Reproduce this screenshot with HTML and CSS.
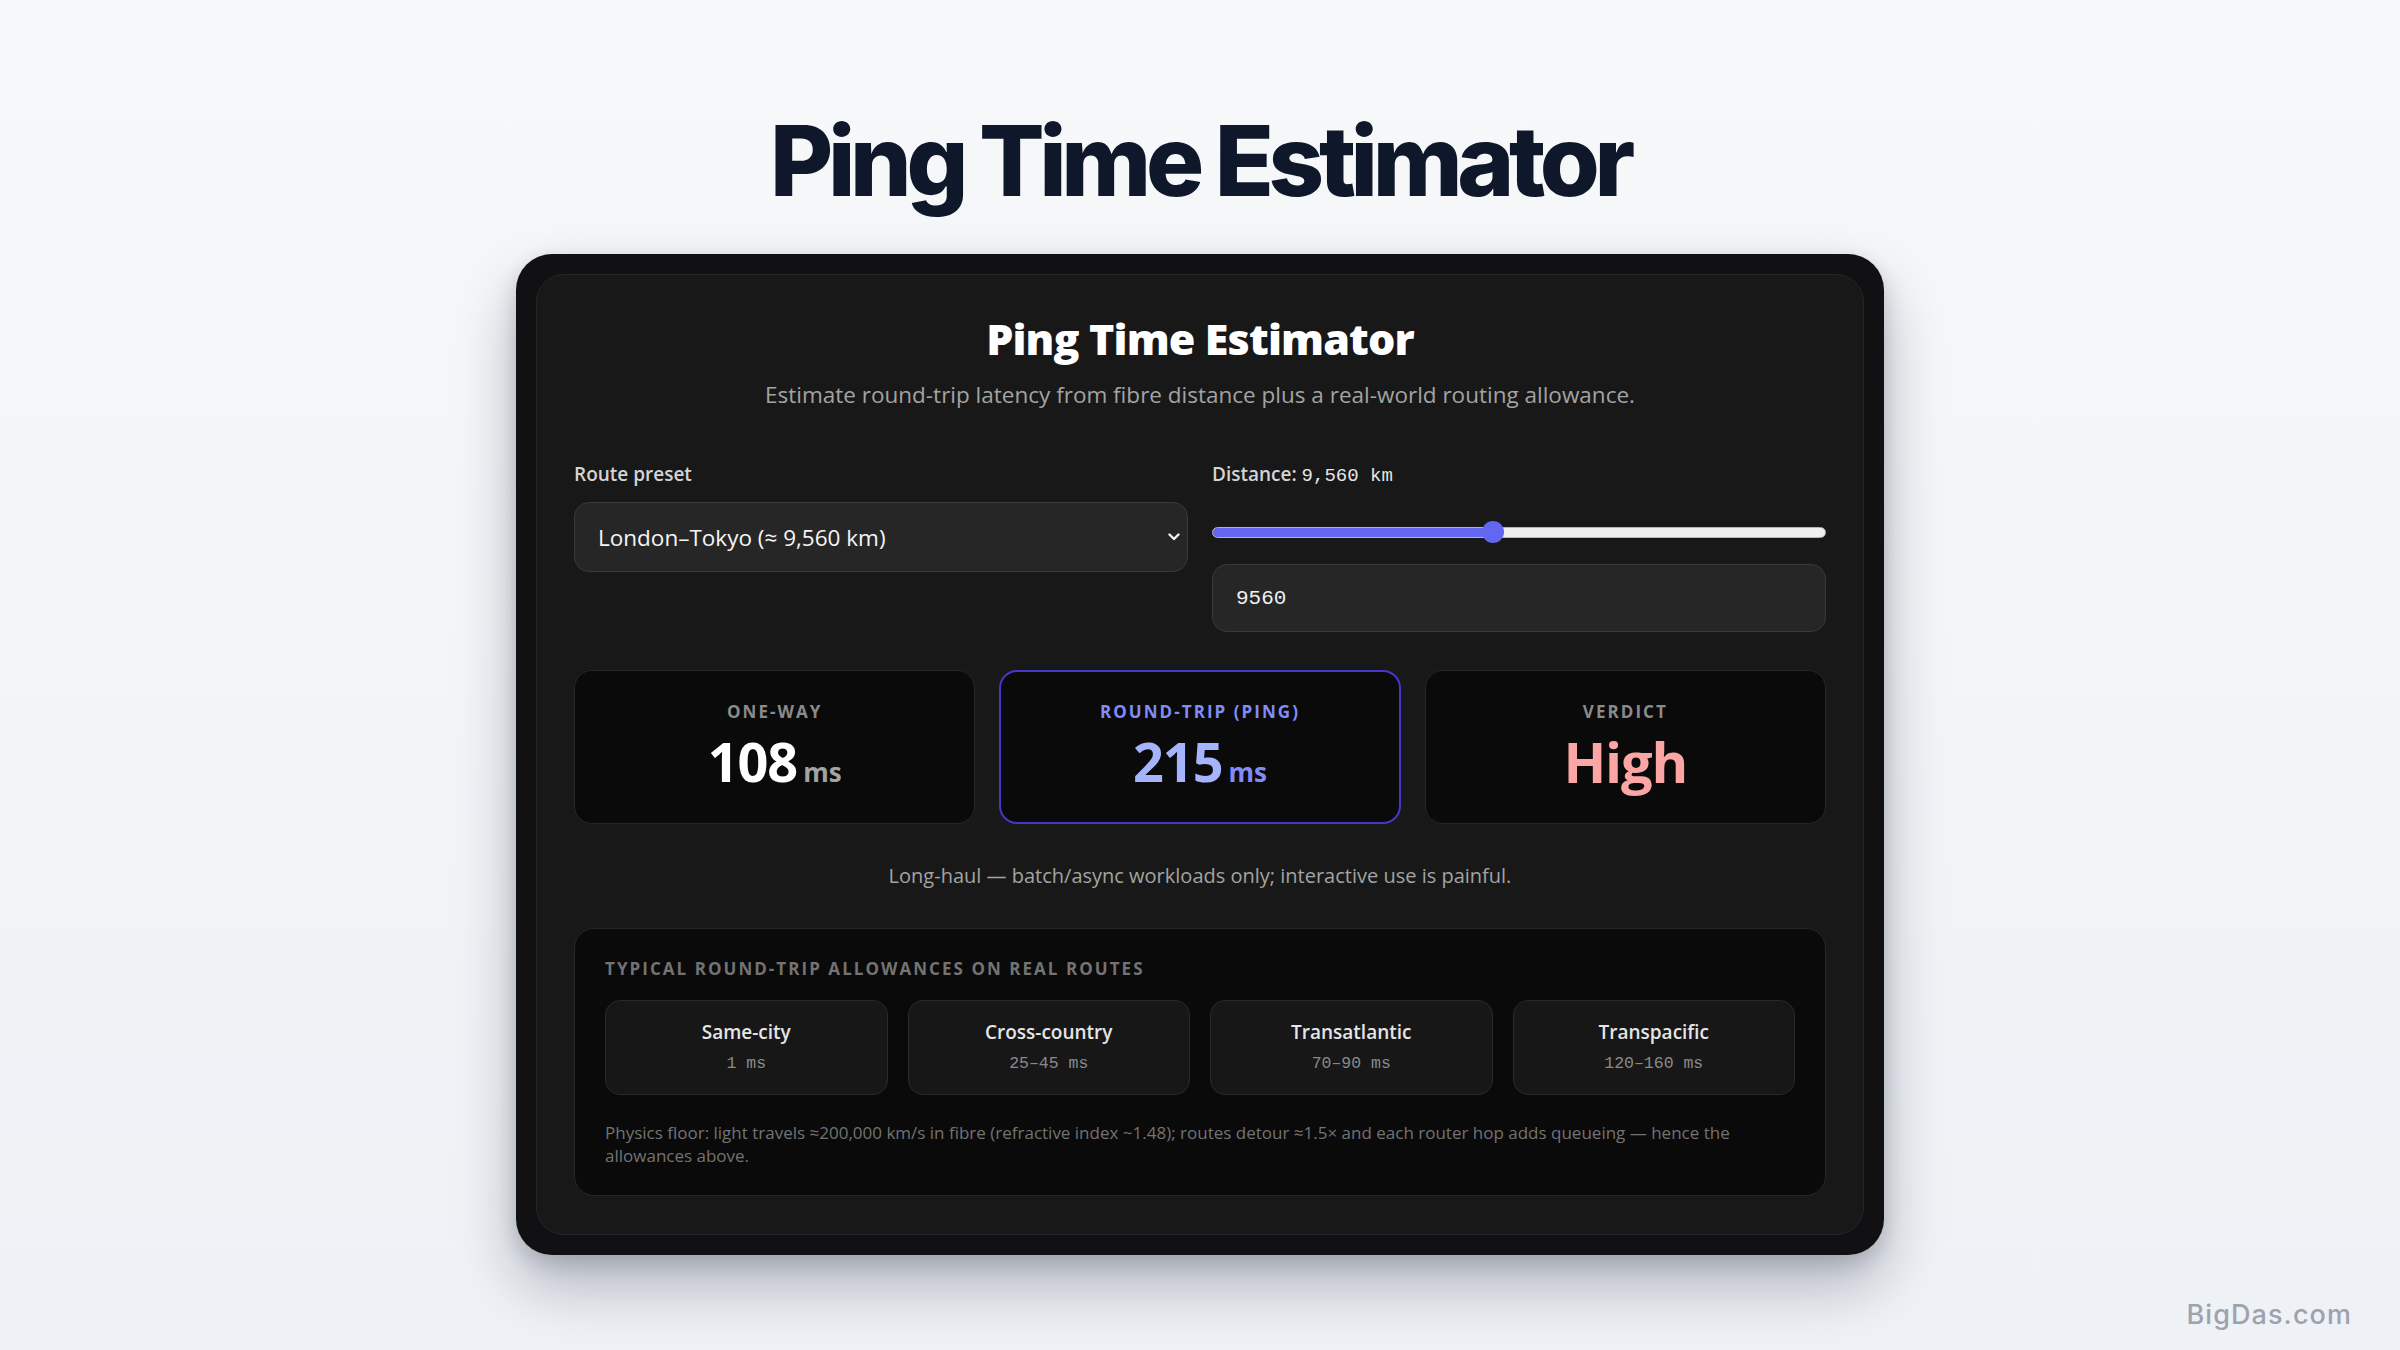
FILE: index.html
```html
<!DOCTYPE html>
<html lang="en">
<head>
<meta charset="utf-8">
<title>Ping Time Estimator</title>
<link rel="stylesheet" href="styles.css">
</head>
<body>
<main class="page">
  <h1 class="hero">Ping Time Estimator</h1>
  <section class="frame">
    <div class="card">
      <h2 class="card-title">Ping Time Estimator</h2>
      <p class="subtitle">Estimate round-trip latency from fibre distance plus a real-world routing allowance.</p>

      <div class="controls">
        <div class="field">
          <label class="label" for="preset">Route preset</label>
          <div class="select-wrap">
            <select id="preset" class="select">
              <option>London–Tokyo (≈ 9,560 km)</option>
            </select>
            <svg class="chevron" viewBox="0 0 12 8" width="12" height="8" aria-hidden="true"><path d="M1.5 1.5 L6 6 L10.5 1.5" fill="none" stroke="#f5f5f5" stroke-width="2.4" stroke-linecap="round" stroke-linejoin="round"/></svg>
          </div>
        </div>
        <div class="field">
          <label class="label" for="dist">Distance: <span class="mono">9,560 km</span></label>
          <input id="dist" class="range" type="range" min="0" max="21000" value="9560" style="--pct:45.5%">
          <input class="number" type="text" value="9560">
        </div>
      </div>

      <div class="stats">
        <div class="stat">
          <div class="stat-label">ONE-WAY</div>
          <div class="stat-value">108<span class="unit">ms</span></div>
        </div>
        <div class="stat stat-accent">
          <div class="stat-label">ROUND-TRIP (PING)</div>
          <div class="stat-value">215<span class="unit">ms</span></div>
        </div>
        <div class="stat stat-verdict">
          <div class="stat-label">VERDICT</div>
          <div class="stat-value">High</div>
        </div>
      </div>

      <p class="note">Long-haul — batch/async workloads only; interactive use is painful.</p>

      <div class="panel">
        <div class="panel-title">TYPICAL ROUND-TRIP ALLOWANCES ON REAL ROUTES</div>
        <div class="routes">
          <div class="route"><div class="route-name">Same-city</div><div class="route-ms">1 ms</div></div>
          <div class="route"><div class="route-name">Cross-country</div><div class="route-ms">25–45 ms</div></div>
          <div class="route"><div class="route-name">Transatlantic</div><div class="route-ms">70–90 ms</div></div>
          <div class="route"><div class="route-name">Transpacific</div><div class="route-ms">120–160 ms</div></div>
        </div>
        <p class="footnote">Physics floor: light travels ≈200,000 km/s in fibre (refractive index ~1.48); routes detour ≈1.5× and each router hop adds queueing — hence the allowances above.</p>
      </div>
    </div>
  </section>
  <div class="brand">BigDas.com</div>
</main>
</body>
</html>
```

FILE: styles.css
```css
* { box-sizing: border-box; }

html, body {
  margin: 0;
  padding: 0;
}

body {
  min-height: 100vh;
  background: linear-gradient(180deg, #f7f8fa 0%, #eef1f5 100%);
  font-family: "Open Sans", "Noto Sans", sans-serif;
  color: #e5e5e5;
}

.page {
  min-height: 100vh;
  display: flex;
  flex-direction: column;
  align-items: center;
  padding-top: 102px;
  position: relative;
}

.hero {
  margin: 0;
  font-family: Inter, "Noto Sans", sans-serif;
  font-weight: 800;
  font-size: 97px;
  line-height: 118px;
  letter-spacing: -0.055em;
  color: #0f172a;
}

.frame {
  margin-top: 34px;
  width: 1368px;
  padding: 20px;
  background: #111113;
  border-radius: 36px;
  box-shadow: 0 30px 60px rgba(15, 23, 42, 0.28), 0 8px 20px rgba(15, 23, 42, 0.15);
}

.card {
  background: #181818;
  border: 1px solid #262626;
  border-radius: 28px;
  padding: 37px 37px 38px;
}

.card-title {
  margin: 0;
  text-align: center;
  font-weight: 800;
  font-size: 43px;
  line-height: 54px;
  color: #ffffff;
  letter-spacing: -0.02em;
}

.subtitle {
  margin: 14px 0 0;
  text-align: center;
  font-size: 22.5px;
  line-height: 30px;
  color: #a3a3a3;
}

.controls {
  margin-top: 52px;
  display: grid;
  grid-template-columns: 1fr 1fr;
  gap: 24px;
}

.field {
  display: flex;
  flex-direction: column;
}

.label {
  font-size: 19px;
  line-height: 24px;
  font-weight: 600;
  color: #d4d4d4;
  margin-bottom: 16px;
}

.mono {
  font-family: "Liberation Mono", "DejaVu Sans Mono", monospace;
  font-weight: 400;
  color: #e5e5e5;
}

.select-wrap {
  position: relative;
}

.select {
  width: 100%;
  height: 70px;
  appearance: none;
  -webkit-appearance: none;
  background: #262626;
  border: 1px solid #3a3a3a;
  border-radius: 15px;
  padding: 0 48px 0 23px;
  font-family: "Open Sans", "Noto Sans", sans-serif;
  font-size: 22.5px;
  color: #f5f5f5;
}

.chevron {
  position: absolute;
  right: 8px;
  top: 31px;
}

.range {
  -webkit-appearance: none;
  appearance: none;
  width: 100%;
  height: 22px;
  margin: 17px 0 21px;
  background: transparent;
}

.range::-webkit-slider-runnable-track {
  height: 11px;
  border-radius: 6px;
  border: 1px solid #b5b5b5;
  background: linear-gradient(90deg, #6366f1 0, #6366f1 var(--pct), #efefef var(--pct), #efefef 100%);
}

.range::-webkit-slider-thumb {
  -webkit-appearance: none;
  width: 22px;
  height: 22px;
  margin-top: -6.5px;
  border-radius: 50%;
  background: #6366f1;
  border: none;
}

.number {
  height: 68px;
  width: 100%;
  background: #262626;
  border: 1px solid #3a3a3a;
  border-radius: 15px;
  padding: 0 23px;
  font-family: "Liberation Mono", "DejaVu Sans Mono", monospace;
  font-size: 21px;
  color: #f0f0f0;
}

.stats {
  margin-top: 38px;
  display: grid;
  grid-template-columns: repeat(3, 1fr);
  gap: 24px;
}

.stat {
  background: #0a0a0a;
  border: 1px solid #262626;
  border-radius: 18px;
  padding: 30px 16px 30px;
  display: flex;
  flex-direction: column;
  align-items: center;
  gap: 8px;
  height: 154px;
}

.stat-label {
  font-size: 17px;
  line-height: 22px;
  font-weight: 700;
  letter-spacing: 0.12em;
  color: #8a8a8a;
}

.stat-value {
  font-size: 54px;
  line-height: 60px;
  font-weight: 700;
  color: #ffffff;
  letter-spacing: -0.02em;
}

.unit {
  font-size: 26px;
  font-weight: 700;
  color: #a3a3a3;
  margin-left: 6px;
  letter-spacing: 0;
}

.stat-accent {
  border: 2px solid #4338ca;
  padding-top: 29px;
}

.stat-accent .stat-label { color: #818cf8; }
.stat-accent .stat-value { color: #a5b4fc; }
.stat-accent .unit { color: #818cf8; }

.stat-verdict .stat-value {
  color: #fca5a5;
  font-size: 56px;
}

.note {
  margin: 38px 0 0;
  text-align: center;
  font-size: 20px;
  line-height: 28px;
  color: #a3a3a3;
}

.panel {
  margin-top: 38px;
  background: #0a0a0a;
  border: 1px solid #262626;
  border-radius: 20px;
  padding: 30px 30px 28px;
}

.panel-title {
  font-size: 17px;
  line-height: 20px;
  font-weight: 700;
  letter-spacing: 0.12em;
  color: #737373;
}

.routes {
  margin-top: 21px;
  display: grid;
  grid-template-columns: repeat(4, 1fr);
  gap: 20px;
}

.route {
  background: #171717;
  border: 1px solid #2a2a2a;
  border-radius: 15px;
  padding: 18px 12px 20px;
  text-align: center;
}

.route-name {
  font-size: 19px;
  line-height: 26px;
  font-weight: 600;
  color: #e5e5e5;
}

.route-ms {
  margin-top: 9px;
  font-family: "Liberation Mono", "DejaVu Sans Mono", monospace;
  font-size: 16.5px;
  line-height: 20px;
  color: #8a8a8a;
}

.footnote {
  margin: 26px 0 0;
  font-size: 17px;
  line-height: 23px;
  color: #737373;
}

.brand {
  position: absolute;
  right: 48px;
  bottom: 19px;
  font-family: Inter, "Noto Sans", sans-serif;
  font-weight: 500;
  font-size: 27px;
  letter-spacing: 0.04em;
  color: #9ca3af;
}
```
